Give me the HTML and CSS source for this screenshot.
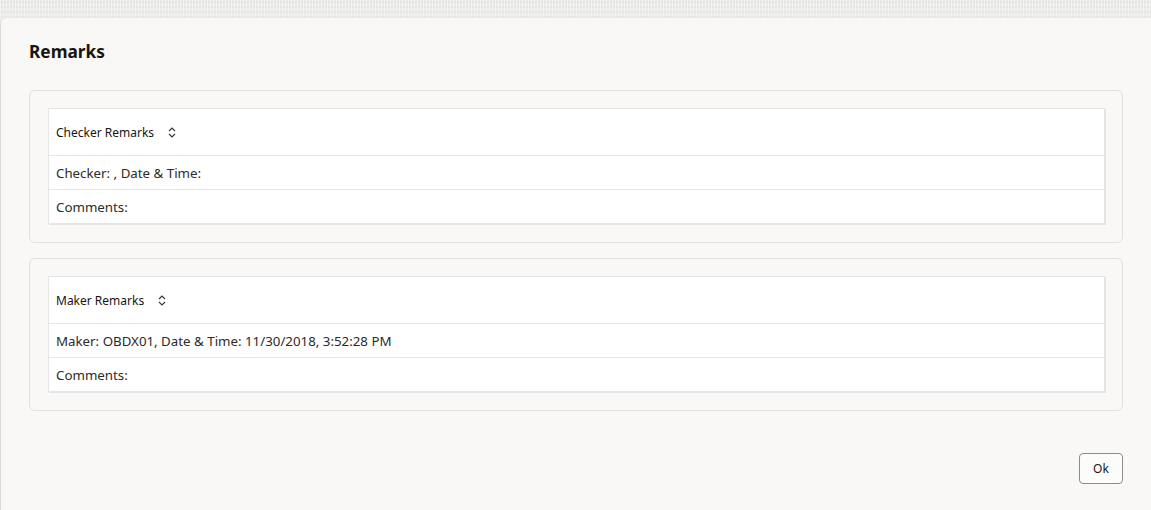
FILE: index.html
```html
<!DOCTYPE html>
<html lang="en">
<head>
    <meta charset="UTF-8">
    <title>Remarks</title>
    <link rel="stylesheet" href="styles.css">
</head>
<body>
<div class="backdrop"></div>
<div class="dialog">
    <h1 class="dialog-title">Remarks</h1>

    <div class="panel">
        <table class="remarks-table">
            <thead>
                <tr>
                    <th>
                        <span class="th-label">Checker Remarks</span>
                        <svg class="sort-icon" width="8" height="11" viewBox="0 0 8 11">
                            <path d="M1 4 L4 1 L7 4 M1 7 L4 10 L7 7" fill="none" stroke="#333" stroke-width="1.1"/>
                        </svg>
                    </th>
                </tr>
            </thead>
            <tbody>
                <tr><td>Checker: , Date &amp; Time:</td></tr>
                <tr><td>Comments:</td></tr>
            </tbody>
        </table>
    </div>

    <div class="panel">
        <table class="remarks-table">
            <thead>
                <tr>
                    <th>
                        <span class="th-label">Maker Remarks</span>
                        <svg class="sort-icon" width="8" height="11" viewBox="0 0 8 11">
                            <path d="M1 4 L4 1 L7 4 M1 7 L4 10 L7 7" fill="none" stroke="#333" stroke-width="1.1"/>
                        </svg>
                    </th>
                </tr>
            </thead>
            <tbody>
                <tr><td>Maker: OBDX01, Date &amp; Time: 11/30/2018, 3:52:28 PM</td></tr>
                <tr><td>Comments:</td></tr>
            </tbody>
        </table>
    </div>

    <div class="dialog-footer">
        <button class="btn-ok">Ok</button>
    </div>
</div>
</body>
</html>
```

FILE: styles.css
```css
* {
    box-sizing: border-box;
}

html, body {
    margin: 0;
    height: 100%;
}

body {
    font-family: "Noto Sans", "Open Sans", sans-serif;
    color: #161513;
    background: #ebebea;
    display: flex;
    flex-direction: column;
    overflow: hidden;
}

/* textured strip behind the dialog */
.backdrop {
    height: 18px;
    flex: none;
    background-color: #ebebea;
    background-image:
        repeating-linear-gradient(90deg, rgba(255,255,255,0.45) 0 1px, transparent 1px 3px),
        repeating-linear-gradient(0deg, rgba(0,0,0,0.025) 0 2px, transparent 2px 5px);
}

.dialog {
    flex: 1;
    background: #f9f8f6;
    border-left: 1px solid #dcdbd8;
    border-top-left-radius: 6px;
    padding: 22px 28px 0 28px;
}

.dialog-title {
    margin: 0 0 26px 0;
    font-size: 17.3px;
    font-weight: 700;
    line-height: 24px;
    color: #161513;
}

.panel {
    border: 1px solid #e1e0dd;
    border-radius: 6px;
    padding: 17px 17px 18px 18px;
    margin-bottom: 15px;
}

.remarks-table {
    width: 100%;
    border-collapse: collapse;
    background: #ffffff;
    border: 1px solid #e6e6e6;
    box-shadow: 1px 1px 0 #e4e4e4;
}

.remarks-table th {
    text-align: left;
    font-size: 12px;
    font-weight: 400;
    color: #161513;
    height: 47px;
    padding: 0 7px;
    border-bottom: 1px solid #e6e6e6;
}

.th-label {
    vertical-align: middle;
}

.sort-icon {
    vertical-align: middle;
    margin-left: 11px;
}

.remarks-table td {
    font-size: 13.3px;
    color: #2b2b2b;
    height: 34px;
    padding: 0 7px;
    border-bottom: 1px solid #e6e6e6;
}

.dialog-footer {
    display: flex;
    justify-content: flex-end;
    padding-top: 27px;
}

.btn-ok {
    font-family: "Noto Sans", "Open Sans", sans-serif;
    font-size: 12px;
    color: #161513;
    background: #fcfcfb;
    border: 1px solid #8e8c89;
    border-radius: 4px;
    width: 44px;
    height: 31px;
    padding: 0;
}
```
